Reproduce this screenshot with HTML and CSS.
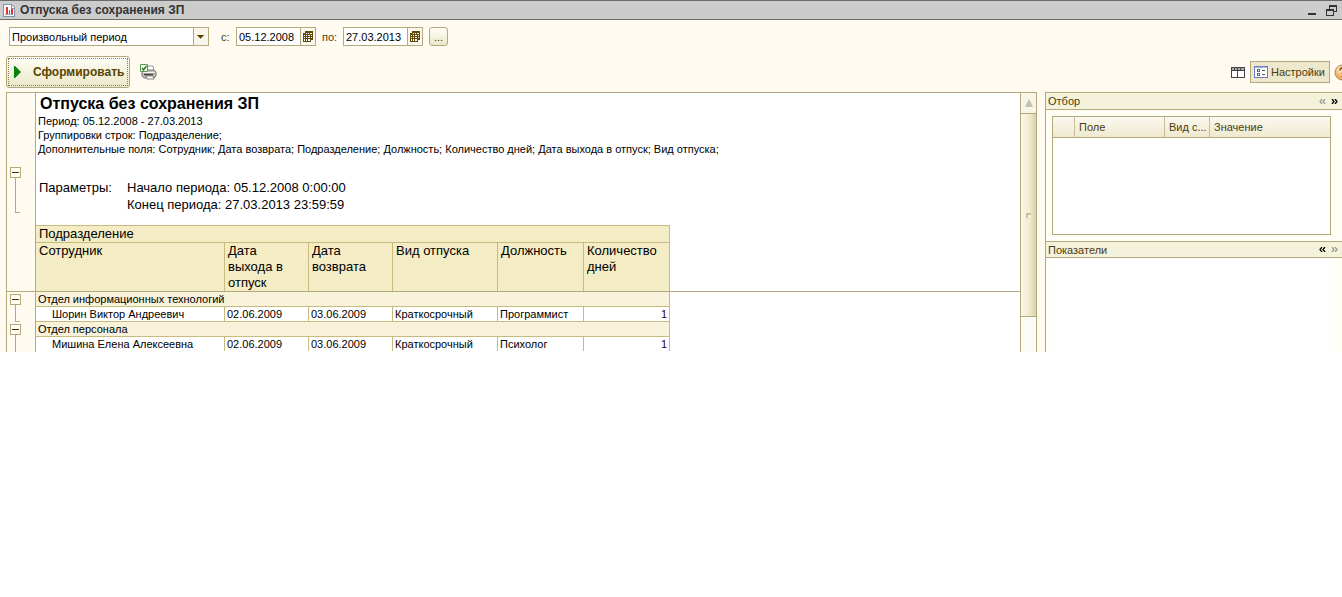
FILE: index.html
```html
<!DOCTYPE html>
<html lang="ru">
<head>
<meta charset="utf-8">
<title>Отпуска без сохранения ЗП</title>
<link rel="stylesheet" href="styles.css">
</head>
<body>
<div class="app">
  <header class="titlebar">
    <svg class="icon" width="14" height="15" viewBox="0 0 14 15" shape-rendering="crispEdges">
      <path d="M1.500 1.500h8l3 3v9h-11z" fill="#fff" stroke="#7d93aa"/>
      <path d="M9 2v3h3" fill="none" stroke="#7d93aa"/>
      <path d="M4 4h2v7H4z" fill="#d33"/>
      <path d="M7 7h1v4H7z" fill="#2a9a3c"/>
      <path d="M9 6h2v5H9z" fill="#d33"/>
      <path d="M3 11h8v1H3z" fill="#9aa"/>
    </svg>
    <h1 class="titlebar-text">Отпуска без сохранения ЗП</h1>
    <button class="plain" aria-label="Свернуть"><svg width="9" height="12" viewBox="0 0 9 12"><path d="M0 9h8v2H0z" fill="#333"/></svg></button>
    <button class="plain" aria-label="Восстановить"><svg width="11" height="11" viewBox="0 0 11 11" shape-rendering="crispEdges"><path d="M3 0h8v7H8V6h2V2H4v2H3zM0 4h8v7H0zM1 6v4h6V6z" fill="#333" fill-rule="evenodd"/></svg></button>
  </header>

  <form class="period">
    <span class="combo">
      <select class="combo-select" aria-label="Период"><option>Произвольный период</option></select>
      <svg class="combo-arrow" width="15" height="17" viewBox="0 0 15 17"><path d="M3 7h8l-4 4z" fill="#5a4300"/></svg>
    </span>
    <label class="period-label from" for="from">с:</label>
    <span class="date">
      <input class="date-input" id="from" value="05.12.2008">
      <button class="date-button" type="button" aria-label="Календарь"><svg width="10" height="11" viewBox="0 0 10 11" shape-rendering="crispEdges"><path d="M2 0h8v9H8v2H0V2h2z" fill="#64480a"/><path d="M3 2h1v1H3zM5 2h1v1H5zM7 2h2v1H7zM1 4h1v1H1zM3 4h1v1H3zM5 4h2v1H5zM8 4h1v1H8zM1 6h1v1H1zM3 6h1v1H3zM5 6h2v1H5zM8 6h1v1H8zM1 8h1v1H1zM3 8h1v1H3zM5 8h2v1H5zM1 9h1v1H1zM3 9h1v1H3zM5 9h2v1H5z" fill="#fff"/></svg></button>
    </span>
    <label class="period-label to" for="to">по:</label>
    <span class="date">
      <input class="date-input" id="to" value="27.03.2013">
      <button class="date-button" type="button" aria-label="Календарь"><svg width="10" height="11" viewBox="0 0 10 11" shape-rendering="crispEdges"><path d="M2 0h8v9H8v2H0V2h2z" fill="#64480a"/><path d="M3 2h1v1H3zM5 2h1v1H5zM7 2h2v1H7zM1 4h1v1H1zM3 4h1v1H3zM5 4h2v1H5zM8 4h1v1H8zM1 6h1v1H1zM3 6h1v1H3zM5 6h2v1H5zM8 6h1v1H8zM1 8h1v1H1zM3 8h1v1H3zM5 8h2v1H5zM1 9h1v1H1zM3 9h1v1H3zM5 9h2v1H5z" fill="#fff"/></svg></button>
    </span>
    <button class="more" type="button">...</button>
  </form>

  <div class="toolbar">
    <button class="generate"><span class="generate-inner"><svg width="7" height="12" viewBox="0 0 7 12"><path d="M0 0h1l6 6-6 6H0z" fill="#078207"/></svg>Сформировать</span></button>
    <button class="plain print" aria-label="Печать"><svg width="17" height="16" viewBox="0 0 17 16">
      <path d="M7 2h6l1 5H7z" fill="#fff" stroke="#999"/>
      <path d="M2 8l3-2h9l2 2v4l-2 2H4l-2-2z" fill="#c4c0be" stroke="#777"/>
      <path d="M3 8.500h12" stroke="#f2f0ee"/>
      <path d="M4 10.500h9" stroke="#443c3a" stroke-width="1.500"/>
      <path d="M13 9h2v1h-2z" fill="#d08a6a"/>
      <path d="M6 12h7l1 3H7z" fill="#fff" stroke="#666" stroke-width=".8"/>
      <path d="M.5.5h7v7h-7z" fill="#fff" stroke="#5a9a48"/>
      <path d="M2 4l1.500 2L6.500 2" fill="none" stroke="#168016" stroke-width="1.400"/>
    </svg></button>
    <span class="spacer"></span>
    <button class="plain panel-toggle" aria-label="Панели"><svg width="14" height="11" viewBox="0 0 14 11" shape-rendering="crispEdges"><path d="M0 0h14v11H0z" fill="#444"/><path d="M1 4h5v6H1zM7 4h6v6H7z" fill="#fff"/><path d="M1 1h2v2H1zM4 1h2v2H4zM7 1h2v2H7zM10 1h3v2h-3z" fill="#aaa"/></svg></button>
    <button class="settings"><svg width="14" height="12" viewBox="0 0 14 12" shape-rendering="crispEdges"><path d="M.5.5h13v11H.5z" fill="#fff" stroke="#6c7fc4"/><path d="M1 1h12v1H1z" fill="#a9b6e8"/><path d="M3 3h3v3H3zM3 7h3v3H3z" fill="#5468ad"/><path d="M4 4h1v1H4zM4 8h1v1H4z" fill="#fff"/><path d="M8 4h3v1H8zM8 8h3v1H8z" fill="#555"/></svg>Настройки</button>
    <button class="plain help" aria-label="Справка"><svg width="17" height="17" viewBox="0 0 17 17"><defs><radialGradient id="amber" cx=".4" cy=".3"><stop offset="0" stop-color="#fff0d0"/><stop offset="1" stop-color="#f0ae58"/></radialGradient></defs><circle cx="8.500" cy="8.500" r="7.500" fill="url(#amber)" stroke="#a58a68"/><path d="M6 6.500Q6 4 8.500 4T11 6.500Q11 8 8.500 9v1.500M8.500 12v1.500" fill="none" stroke="#7a4a10" stroke-width="1.500"/></svg></button>
  </div>

  <main class="workspace">
    <section class="sheet" aria-label="Отчет">
      <div class="sheet-content">
        <div class="pane frozen">
          <div class="gutter">
            <div class="group group-head"><button class="fold" aria-label="Свернуть группу"></button><span class="branch"></span></div>
          </div>
          <div class="cells">
            <h2 class="report-title">Отпуска без сохранения ЗП</h2>
            <div class="report-info">
              <p>Период: 05.12.2008 - 27.03.2013</p>
              <p>Группировки строк: Подразделение;</p>
              <p>Дополнительные поля: Сотрудник; Дата возврата; Подразделение; Должность; Количество дней; Дата выхода в отпуск; Вид отпуска;</p>
            </div>
            <div class="params">
              <span>Параметры:</span>
              <div><p>Начало периода: 05.12.2008 0:00:00</p><p>Конец периода: 27.03.2013 23:59:59</p></div>
            </div>
            <table class="grid grid-head">
              <colgroup><col class="c-name"><col class="c-date"><col class="c-date"><col class="c-kind"><col class="c-post"><col class="c-post"></colgroup>
              <thead>
                <tr><th colspan="6">Подразделение</th></tr>
                <tr><th>Сотрудник</th><th>Дата<br>выхода в<br>отпуск</th><th>Дата возврата</th><th>Вид отпуска</th><th>Должность</th><th>Количество дней</th></tr>
              </thead>
            </table>
          </div>
        </div>
        <div class="pane">
          <div class="gutter">
            <div class="group"><button class="fold" aria-label="Свернуть группу"></button><span class="branch"></span></div>
            <div class="group open"><button class="fold" aria-label="Свернуть группу"></button><span class="branch"></span></div>
          </div>
          <div class="cells">
            <table class="grid grid-body">
              <colgroup><col class="c-name"><col class="c-date"><col class="c-date"><col class="c-kind"><col class="c-post"><col class="c-post"></colgroup>
              <tbody>
                <tr class="dept"><td colspan="6">Отдел информационных технологий</td></tr>
                <tr><td class="person">Шорин Виктор Андреевич</td><td>02.06.2009</td><td>03.06.2009</td><td>Краткосрочный</td><td>Программист</td><td class="num">1</td></tr>
                <tr class="dept"><td colspan="6">Отдел персонала</td></tr>
                <tr><td class="person">Мишина Елена Алексеевна</td><td>02.06.2009</td><td>03.06.2009</td><td>Краткосрочный</td><td>Психолог</td><td class="num">1</td></tr>
              </tbody>
            </table>
          </div>
        </div>
      </div>
      <div class="scrollbar">
        <button class="scroll-up" aria-label="Вверх"><svg width="8" height="8" viewBox="0 0 8 8"><path d="M4 0l4 8H0z" fill="#c3c0b0"/></svg></button>
        <div class="thumb"><span class="grip"></span></div>
      </div>
    </section>

    <aside class="side">
      <h3 class="side-title"><span>Отбор</span>
        <button class="plain muted" aria-label="Влево"><svg class="chev" width="7" height="5" viewBox="0 0 7 5"><path d="M3 0L1 2.500 3 5M6 0L4 2.500 6 5"/></svg></button>
        <button class="plain" aria-label="Вправо"><svg class="chev" width="7" height="5" viewBox="0 0 7 5"><path d="M1 0l2 2.500L1 5M4 0l2 2.500L4 5"/></svg></button>
      </h3>
      <div class="filter">
        <table class="filter-table">
          <colgroup><col class="f-mark"><col class="f-field"><col class="f-kind"><col></colgroup>
          <thead><tr><th></th><th>Поле</th><th>Вид с...</th><th>Значение</th></tr></thead>
        </table>
      </div>
      <h3 class="side-title"><span>Показатели</span>
        <button class="plain" aria-label="Влево"><svg class="chev" width="7" height="5" viewBox="0 0 7 5"><path d="M3 0L1 2.500 3 5M6 0L4 2.500 6 5"/></svg></button>
        <button class="plain muted" aria-label="Вправо"><svg class="chev" width="7" height="5" viewBox="0 0 7 5"><path d="M1 0l2 2.500L1 5M4 0l2 2.500L4 5"/></svg></button>
      </h3>
      <div class="indicators"></div>
    </aside>
  </main>
</div>
</body>
</html>
```
FILE: styles.css
```css
* { box-sizing: border-box; }

body, h1, h2, h3, p { margin: 0; }

body {
  background: #fff;
  color: #000;
  font-family: "Liberation Sans", Arial, sans-serif;
  font-size: 11px;
}

button, input, select { font: inherit; color: inherit; border-radius: 0; margin: 0; }

svg { display: block; flex: none; }

.app { background: #fffbf0; overflow: hidden; }

.plain { padding: 0; border: 0; background: none; flex: none; }

.titlebar {
  display: flex;
  align-items: center;
  gap: 4px;
  height: 20px;
  padding: 0 5px 0 2px;
  border-top: 1px solid #6b6b6b;
  border-bottom: 1px solid #6b6b6b;
  background: #ccc;
}

.titlebar-text { flex: 1; font-size: 12px; line-height: 18px; color: #333; }
.titlebar .plain + .plain { margin-left: 5px; }

.period { display: flex; align-items: center; padding: 7px 9px 0; }

.combo { position: relative; width: 200px; height: 19px; }

.combo-select {
  appearance: none;
  width: 100%;
  height: 100%;
  padding: 0 16px 0 2px;
  border: 1px solid #b3a97c;
  background: #fff;
}

.combo-arrow {
  position: absolute;
  top: 1px;
  right: 1px;
  border-left: 1px solid #b3a97c;
  background: #f8f6ea;
  pointer-events: none;
}

.period-label { color: #4a3c10; }
.from { width: 15px; margin-left: 12px; }
.to { width: 21px; margin-left: 6px; }

.date { display: flex; width: 80px; height: 19px; border: 1px solid #b3a97c; background: #fff; }
.date-input { flex: 1; min-width: 0; padding: 0 2px; border: 0; background: none; }

.date-button {
  display: flex;
  align-items: center;
  justify-content: center;
  width: 15px;
  padding: 0;
  border: 0;
  border-left: 1px solid #b3a97c;
  background: #faf8f0;
}

.more {
  width: 19px;
  height: 19px;
  margin-left: 6px;
  padding: 0;
  border: 1px solid #b3a97c;
  border-radius: 3px;
  background: linear-gradient(#fffef6, #ebe7c9);
  color: #4a3c10;
}

.toolbar { display: flex; align-items: center; padding: 10px 0 4px 6px; }

.generate {
  width: 124px;
  height: 32px;
  margin-right: 10px;
  padding: 1px;
  border: 1px solid #b3a97c;
  border-radius: 3px;
  background: linear-gradient(#fffef6, #ebe7c9);
  color: #5a4300;
  font-size: 12px;
  font-weight: bold;
}

.generate-inner {
  display: flex;
  align-items: center;
  gap: 12px;
  height: 28px;
  padding-left: 5px;
  border: 1px dotted #8a8060;
}

.spacer { flex: 1; }
.panel-toggle { margin-right: 5px; }

.settings {
  display: flex;
  align-items: center;
  gap: 3px;
  width: 80px;
  height: 22px;
  padding: 0 3px;
  border: 1px solid #b3a97c;
  background: #ede8cb;
  color: #4a3c10;
}

.help { margin: 0 -9px 0 4px; }

.workspace { display: flex; gap: 8px; padding-left: 6px; }

.sheet { display: flex; flex: 1; min-width: 0; border: solid #b3a97c; border-width: 1px 1px 0; }
.sheet-content { flex: 1; min-width: 0; background: #fff; }

.pane { display: flex; }
.frozen { border-bottom: 1px solid #b3a97c; }
.gutter { flex: none; width: 29px; border-right: 1px solid #b3a97c; background: #fffbf0; }
.cells { flex: 1; min-width: 0; }

.group { display: flex; flex-direction: column; height: 30px; padding: 2px 0 0 3px; }
.group-head { height: 120px; padding-top: 74px; }

.fold {
  display: flex;
  align-items: center;
  justify-content: center;
  flex: none;
  width: 11px;
  height: 11px;
  padding: 0;
  border: 1px solid #b3a97c;
  background: #fffdf4;
}

.fold::before { content: ""; width: 7px; height: 1px; background: #4a3000; }
.branch { flex: 1; width: 5px; margin-left: 5px; border: solid #b3a97c; border-width: 0 0 1px 1px; }
.open .branch { border-bottom: 0; }

.report-title { padding-left: 4px; font-size: 16px; line-height: 21px; }
.report-info { padding-left: 2px; line-height: 14px; }
.params { display: flex; padding: 23px 0 12px 3px; font-size: 13px; line-height: 17px; }
.params span { width: 88px; }

.grid { table-layout: fixed; width: 634px; border-spacing: 0; }
.c-name { width: 189px; }
.c-date { width: 84px; }
.c-kind { width: 105px; }
.c-post { width: 86px; }

.grid th, .grid td {
  padding: 0 2px;
  border-right: 1px solid #c8bb80;
  border-bottom: 1px solid #c8bb80;
  text-align: left;
  vertical-align: top;
  white-space: nowrap;
}

.grid th { padding: 0 3px; background: #f4ecc5; font-size: 13px; font-weight: normal; line-height: 16px; white-space: normal; }
.grid-head { border-top: 1px solid #c8bb80; }
.grid-head tr:last-child th { border-bottom: 0; }
.grid td { line-height: 14px; }
.grid-body tr:last-child td { border-bottom: 0; }
.grid .dept td { background: #f8f2da; }
.grid .person { padding-left: 16px; }
.grid .num { text-align: right; color: #300020; }

.scrollbar { flex: none; width: 16px; border-left: 1px solid #b3a97c; background: #fbfaf5; }

.scroll-up {
  display: flex;
  align-items: center;
  justify-content: center;
  width: 100%;
  height: 21px;
  padding: 0;
  border: 0;
  border-bottom: 1px solid #b3a97c;
  background: #f7f5e6;
}

.thumb {
  display: flex;
  align-items: center;
  justify-content: center;
  height: 203px;
  border-bottom: 1px solid #b3a97c;
  background: linear-gradient(90deg, #fbfae8, #efe9cb 60%, #d8d0a8);
}

.grip { width: 5px; height: 5px; border: solid #c8c2a0; border-width: 2px 0 0 2px; background: #f8f4e0; }

.side { flex: none; display: flex; flex-direction: column; width: 297px; border-left: 1px solid #b3a97c; background: #fffff6; }

.side-title {
  display: flex;
  align-items: center;
  gap: 5px;
  height: 18px;
  padding: 0 4px 0 2px;
  border: solid #b3a97c;
  border-width: 1px 0;
  background: #f5f2dc;
  color: #4a3c10;
  font-size: 11px;
  font-weight: normal;
}

.side-title:nth-of-type(2) { height: 17px; }
.side-title span { flex: 1; }
.chev { fill: none; stroke: #000; stroke-width: 1.3; }
.muted .chev { stroke: #999; }

.filter { height: 119px; margin: 6px 11px 6px 6px; border: 1px solid #b3a97c; background: #fff; }
.filter-table { width: 100%; table-layout: fixed; border-spacing: 0; }
.f-mark { width: 22px; }
.f-field { width: 90px; }
.f-kind { width: 45px; }

.filter-table th {
  height: 21px;
  padding: 0 0 0 4px;
  border-right: 1px solid #c8bf98;
  border-bottom: 1px solid #b3a97c;
  background: linear-gradient(#fbf9f0, #efe9ce);
  color: #4a3c10;
  font-weight: normal;
  text-align: left;
  white-space: nowrap;
}

.filter-table th:last-child { border-right: 0; }
.indicators { flex: 1; margin: 0 11px 0 6px; background: #fff; }
```
